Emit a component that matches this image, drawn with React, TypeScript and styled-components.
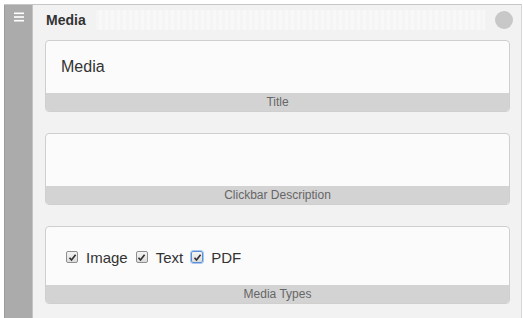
import React from "react";
import styled, { createGlobalStyle } from "styled-components";

const Global = createGlobalStyle`
  html, body {
    margin: 0;
    padding: 0;
    background: #fff;
    font-family: "Liberation Sans", Arial, sans-serif;
  }
`;

const Page = styled.div`
  padding: 4px 1px 0 4px;
`;

const Panel = styled.div`
  display: flex;
  border-top: 1px solid #c6c6c6;
  border-right: 1px solid #d6d6d6;
  min-height: 320px;
`;

const Handle = styled.div`
  width: 29px;
  flex: none;
  background: #ababab;
  border-left: 1px solid #9c9c9c;
  border-right: 1px solid #c4c4c4;
  display: flex;
  justify-content: center;
  padding-top: 7px;
  box-sizing: border-box;
`;

const Content = styled.div`
  flex: 1;
  background: #f2f2f2;
  padding: 0 11px 0 12px;
  display: flex;
  flex-direction: column;
  gap: 21px;
`;

const Header = styled.div`
  display: flex;
  align-items: center;
  height: 30px;
  margin-bottom: -16px;
  gap: 10px;
`;

const HeaderTitle = styled.div`
  font-size: 14px;
  font-weight: bold;
  color: #333;
  padding-left: 1px;
`;

const Grip = styled.div`
  flex: 1;
  height: 20px;
  background: repeating-linear-gradient(
    90deg,
    #f5f5f5 0px,
    #f5f5f5 3px,
    #f8f8f8 3px,
    #f8f8f8 6px
  );
`;

const Dot = styled.div`
  width: 18px;
  height: 18px;
  border-radius: 50%;
  background: #c8c8c8;
  margin-right: -3px;
`;

const Card = styled.div`
  border: 1px solid #cfcfcf;
  border-radius: 4px;
  background: #fbfbfb;
  overflow: hidden;
  display: flex;
  flex-direction: column;
`;

const Body = styled.div<{ h: number }>`
  height: ${({ h }) => h}px;
  display: flex;
  align-items: center;
  padding-left: 15px;
  font-size: 16px;
  color: #333;
`;

const Label = styled.div`
  height: 18px;
  line-height: 18px;
  background: #d3d3d3;
  text-align: center;
  font-size: 12px;
  color: #666;
`;

const Options = styled.div`
  display: flex;
  align-items: center;
  padding-left: 5px;
  padding-top: 2px;
`;

const Option = styled.label`
  display: flex;
  align-items: center;
  margin-right: 8px;
  font-size: 15px;
  color: #333;
`;

const Box = styled.span<{ focus?: boolean }>`
  width: 12px;
  height: 12px;
  box-sizing: border-box;
  border: 1px solid ${({ focus }) => (focus ? "#5b8fd6" : "#8f8f8f")};
  outline: ${({ focus }) => (focus ? "1px solid #a9c6ee" : "none")};
  border-radius: 2px;
  background: linear-gradient(#f4f4f4, #dcdcdc);
  display: inline-flex;
  align-items: center;
  justify-content: center;
  margin-right: 8px;
`;

function Check({ label, focus }: { label: string; focus?: boolean }) {
  return (
    <Option>
      <Box focus={focus}>
        <svg width="9" height="9" viewBox="0 0 9 9">
          <path d="M1.5 4.8 L3.5 7 L7.6 1.8" fill="none" stroke="#333" strokeWidth="1.7" />
        </svg>
      </Box>
      {label}
    </Option>
  );
}

export default function App() {
  return (
    <Page>
      <Global />
      <Panel>
        <Handle>
          <svg width="10" height="10" viewBox="0 0 10 10">
            <rect x="0" y="0.5" width="10" height="1.6" fill="#fff" />
            <rect x="0" y="4.2" width="10" height="1.6" fill="#fff" />
            <rect x="0" y="7.9" width="10" height="1.6" fill="#fff" />
          </svg>
        </Handle>
        <Content>
          <Header>
            <HeaderTitle>Media</HeaderTitle>
            <Grip />
            <Dot />
          </Header>
          <Card>
            <Body h={52}>Media</Body>
            <Label>Title</Label>
          </Card>
          <Card>
            <Body h={52} />
            <Label>Clickbar Description</Label>
          </Card>
          <Card>
            <Body h={58}>
              <Options>
                <Check label="Image" />
                <Check label="Text" />
                <Check label="PDF" focus />
              </Options>
            </Body>
            <Label>Media Types</Label>
          </Card>
        </Content>
      </Panel>
    </Page>
  );
}
